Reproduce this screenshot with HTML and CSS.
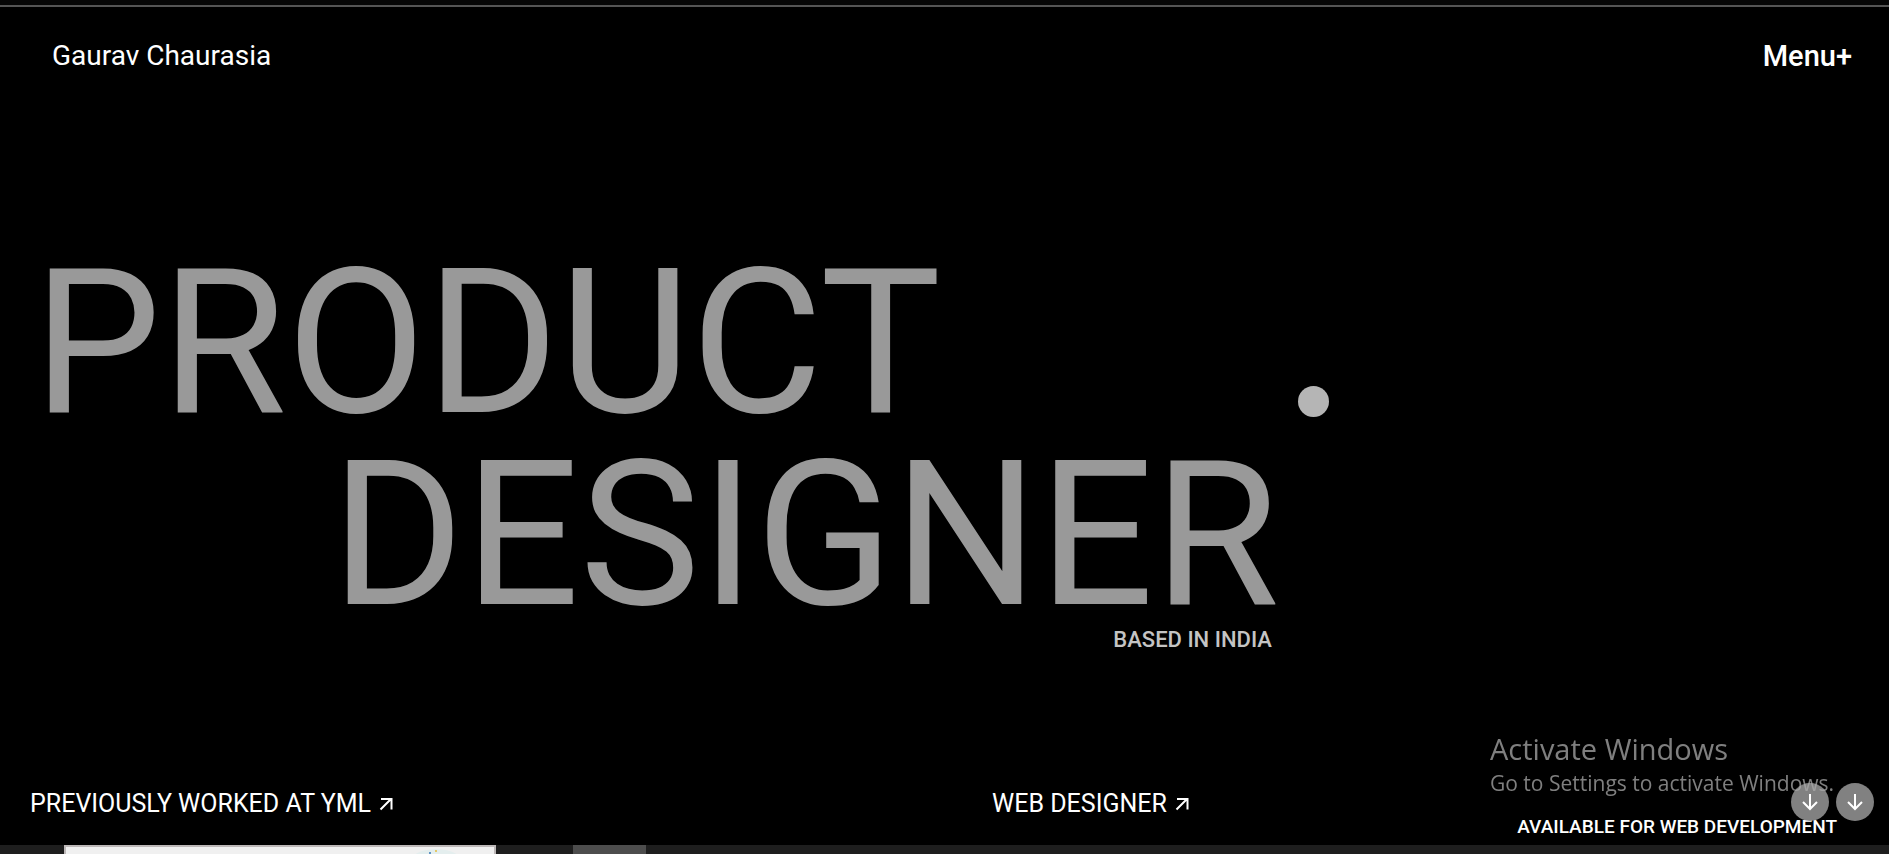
FILE: index.html
```html
<!DOCTYPE html>
<html lang="en">
<head>
<meta charset="utf-8">
<meta name="viewport" content="width=device-width, initial-scale=1">
<title>Gaurav Chaurasia</title>
<link rel="stylesheet" href="styles.css">
</head>
<body>
<div class="page">
  <div class="topbar"></div>
  <header class="header">
    <a class="brand" href="#">Gaurav Chaurasia</a>
    <button class="menu" type="button">Menu+</button>
  </header>
  <main class="hero">
    <div class="headline">
      <h1 class="title"><span class="line">PRODUCT</span><span class="line line-indent">DESIGNER</span></h1>
      <p class="location">BASED IN INDIA</p>
      <span class="cursor-dot"></span>
    </div>
  </main>
  <div class="facts">
    <a class="fact" href="#">PREVIOUSLY WORKED AT YML
      <svg class="out" viewBox="0 0 14 14" aria-hidden="true"><path d="M1.500 12.500 12 2M2 2H12.500V12.500"/></svg></a>
    <a class="fact" href="#">WEB DESIGNER
      <svg class="out" viewBox="0 0 14 14" aria-hidden="true"><path d="M1.500 12.500 12 2M2 2H12.500V12.500"/></svg></a>
    <p class="available">AVAILABLE FOR WEB DEVELOPMENT</p>
  </div>
  <section class="showcase">
    <div class="shot">
      <svg class="shot-art" viewBox="0 0 48 7" aria-hidden="true">
        <ellipse cx="24" cy="14" rx="25" ry="12" fill="#e4eeee"/>
        <rect x="17" y="5" width="2" height="2" fill="#5f93c4"/>
        <rect x="23" y="3" width="2" height="2" fill="#e3c869"/>
      </svg>
    </div>
    <div class="tile"></div>
  </section>
</div>
<div class="scrollers">
  <button class="scroll" type="button" aria-label="Scroll down"><svg viewBox="0 0 18 18" aria-hidden="true"><path d="M9 1V16M2 9 9 16 16 9"/></svg></button>
  <button class="scroll" type="button" aria-label="Next section"><svg viewBox="0 0 18 18" aria-hidden="true"><path d="M9 1V16M2 9 9 16 16 9"/></svg></button>
</div>
<aside class="watermark">
  <p class="wm-title">Activate Windows</p>
  <p class="wm-text">Go to Settings to activate Windows.</p>
</aside>
</body>
</html>
```
FILE: styles.css
```css
* { box-sizing: border-box; }
body {
  margin: 0;
  background: #000;
  color: #fff;
  font-family: Roboto, "Liberation Sans", sans-serif;
}
h1, p { margin: 0; font-weight: 400; }
a { color: inherit; text-decoration: none; }
button { border: 0; padding: 0; background: none; color: inherit; font: inherit; }

.page {
  height: 100vh;
  overflow: hidden;
  display: flex;
  flex-direction: column;
}
.topbar {
  height: 7px;
  flex: none;
  background: #060606;
  border-bottom: 2px solid #555;
}
.header {
  display: flex;
  justify-content: space-between;
  align-items: center;
  padding: 31px 37px 0 52px;
  line-height: 36px;
}
.brand { font-size: 28px; }
.menu { font-size: 29px; font-weight: 500; }

.hero {
  flex: 1;
  padding: 173px 33px 0;
}
.headline {
  position: relative;
  width: fit-content;
}
.title {
  font-size: 203px;
  line-height: 192px;
  color: #999;
}
.line { display: block; }
.line-indent { padding-left: 298px; }
.location {
  margin-top: -3px;
  padding-right: 7px;
  text-align: right;
  font-size: 22px;
  line-height: 24px;
  font-weight: 500;
  color: #c4c4c4;
}
.cursor-dot {
  position: absolute;
  left: 1265px;
  top: 139px;
  width: 31px;
  height: 31px;
  border-radius: 50%;
  background: #b5b5b5;
}

.facts {
  display: grid;
  grid-template-columns: 962px 1fr auto;
  align-items: start;
  padding: 0 52px 6px 30px;
}
.fact {
  display: flex;
  align-items: center;
  gap: 8px;
  font-size: 25px;
  line-height: 30px;
}
.out { width: 14px; height: 14px; }
svg path {
  fill: none;
  stroke: #fff;
  stroke-width: 2;
}
.available {
  margin-top: 25px;
  font-size: 19px;
  line-height: 25px;
  font-weight: 500;
}

.showcase {
  flex: none;
  height: 9px;
  overflow: hidden;
  display: flex;
  gap: 77px;
  padding-left: 64px;
  background: #1e1e1e;
}
.shot {
  width: 432px;
  height: 240px;
  border: 2px solid #bdb8b8;
  background: #f0f0f0;
  padding-right: 34px;
  display: flex;
  justify-content: flex-end;
}
.shot-art { width: 48px; height: 7px; }
.tile { width: 73px; height: 240px; background: #4d4d4d; }

.watermark {
  position: fixed;
  left: calc(100% - 399px);
  bottom: 56px;
  font-family: "Open Sans", "Noto Sans", sans-serif;
  color: rgba(170, 170, 170, 0.750);
  white-space: nowrap;
  pointer-events: none;
}
.wm-title { font-size: 29px; line-height: 38px; }
.wm-text { font-size: 21px; line-height: 30px; }

.scrollers {
  position: fixed;
  right: 15px;
  bottom: 33px;
  display: flex;
  gap: 7px;
}
.scroll {
  width: 38px;
  height: 38px;
  border-radius: 50%;
  background: rgba(140, 140, 140, 0.920);
  display: flex;
  align-items: center;
  justify-content: center;
}
.scroll svg { width: 18px; height: 18px; }
```
